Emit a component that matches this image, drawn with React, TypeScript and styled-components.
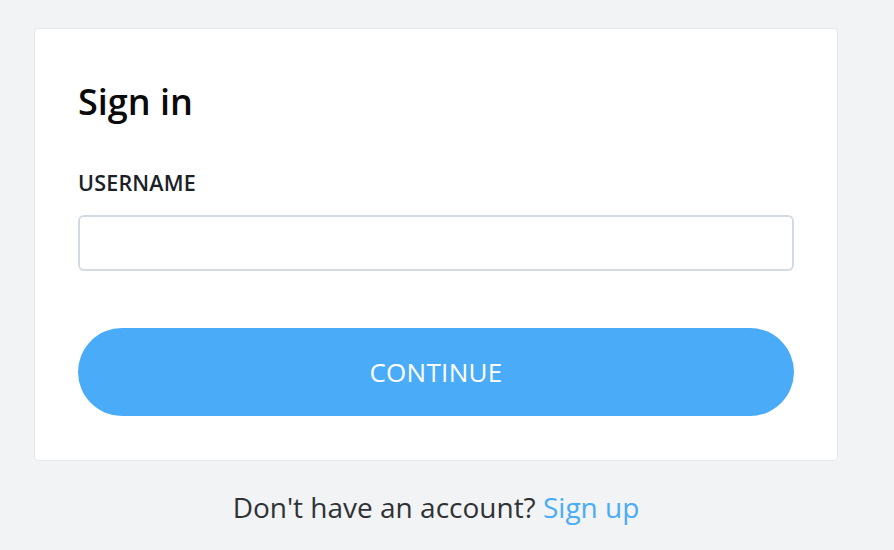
import React from "react";
import styled, { createGlobalStyle } from "styled-components";

const GlobalStyle = createGlobalStyle`
  html, body {
    margin: 0;
    padding: 0;
    background: #f2f3f5;
    font-family: "Open Sans", "Noto Sans", sans-serif;
  }
  * { box-sizing: border-box; }
`;

const Page = styled.div`
  width: 894px;
  height: 550px;
  padding: 28px 56px 0 34px;
  background: #f2f3f5;
  display: flex;
  flex-direction: column;
`;

const Card = styled.form`
  background: #ffffff;
  border: 1px solid #e6e8eb;
  border-radius: 4px;
  padding: 43px 43px 44px;
  display: flex;
  flex-direction: column;
`;

const Title = styled.h1`
  margin: 8px 0 0;
  font-size: 36px;
  line-height: 44px;
  font-weight: 600;
  color: #0a0a0a;
`;

const Label = styled.label`
  margin-top: 45px;
  font-size: 21.5px;
  line-height: 28px;
  font-weight: 600;
  letter-spacing: 0.2px;
  color: #1c2126;
`;

const Input = styled.input`
  margin-top: 18px;
  height: 56px;
  width: 100%;
  border: 2px solid #d3dbe2;
  border-radius: 6px;
  background: #fff;
  outline: none;
  font: inherit;
  padding: 0 14px;
`;

const Button = styled.button`
  margin-top: 57px;
  height: 88px;
  width: 100%;
  border: none;
  border-radius: 44px;
  background: #4aacf8;
  color: #ffffff;
  font-family: "Open Sans", "Noto Sans", sans-serif;
  font-size: 26px;
  font-weight: 400;
  letter-spacing: 0.3px;
  cursor: pointer;
`;

const Footer = styled.p`
  margin: 28px 0 0;
  text-align: center;
  font-size: 28px;
  line-height: 36px;
  color: #2f3235;
`;

const Link = styled.a`
  color: #4aacf8;
  text-decoration: none;
`;

export default function App() {
  return (
    <>
      <GlobalStyle />
      <Page>
        <Card onSubmit={(e) => e.preventDefault()}>
          <Title>Sign in</Title>
          <Label htmlFor="username">USERNAME</Label>
          <Input id="username" type="text" />
          <Button type="submit">CONTINUE</Button>
        </Card>
        <Footer>
          Don't have an account? <Link href="#">Sign up</Link>
        </Footer>
      </Page>
    </>
  );
}
